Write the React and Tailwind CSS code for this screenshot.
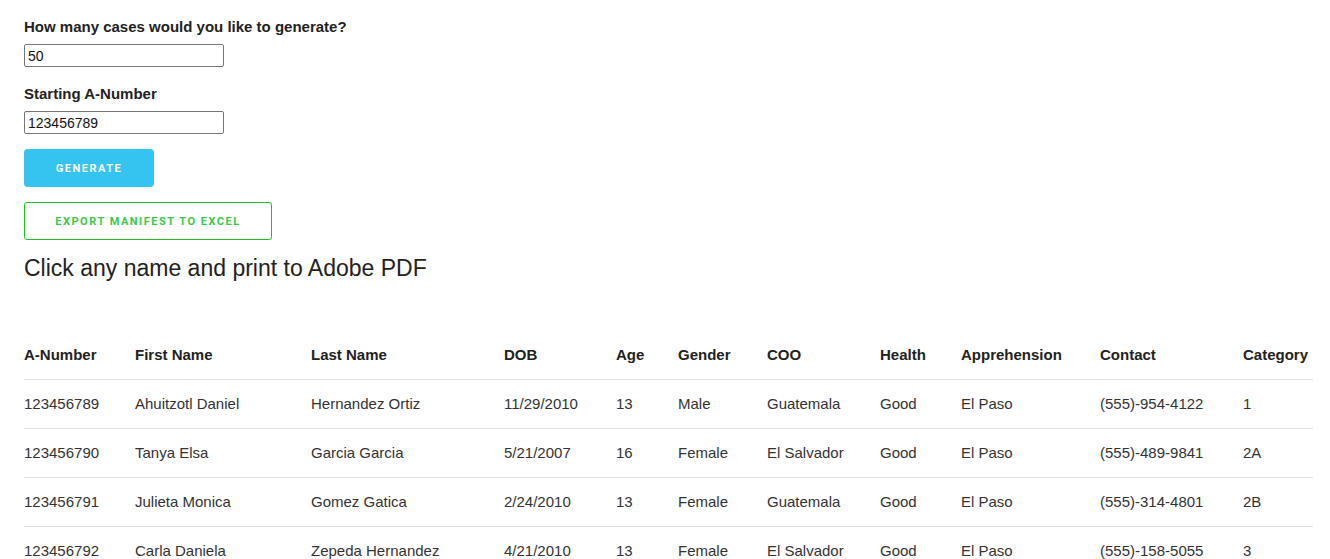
const rows = [
  ['123456789', 'Ahuitzotl Daniel', 'Hernandez Ortiz', '11/29/2010', '13', 'Male', 'Guatemala', 'Good', 'El Paso', '(555)-954-4122', '1'],
  ['123456790', 'Tanya Elsa', 'Garcia Garcia', '5/21/2007', '16', 'Female', 'El Salvador', 'Good', 'El Paso', '(555)-489-9841', '2A'],
  ['123456791', 'Julieta Monica', 'Gomez Gatica', '2/24/2010', '13', 'Female', 'Guatemala', 'Good', 'El Paso', '(555)-314-4801', '2B'],
  ['123456792', 'Carla Daniela', 'Zepeda Hernandez', '4/21/2010', '13', 'Female', 'El Salvador', 'Good', 'El Paso', '(555)-158-5055', '3'],
];

const headers = ['A-Number', 'First Name', 'Last Name', 'DOB', 'Age', 'Gender', 'COO', 'Health', 'Apprehension', 'Contact', 'Category'];
const widths = ['w-[111px]', 'w-[176px]', 'w-[193px]', 'w-[112px]', 'w-[62px]', 'w-[89px]', 'w-[113px]', 'w-[81px]', 'w-[139px]', 'w-[143px]', 'w-[70px]'];

export default function App() {
  return (
    <div className="min-h-screen bg-white px-6 pt-[18px] text-[#212121] font-['Liberation_Sans',Arial,sans-serif]">
      <label htmlFor="count" className="block text-[15px] font-bold leading-[18px] text-[#222]">How many cases would you like to generate?</label>
      <input id="count" defaultValue="50" className="mt-[8px] block h-[23px] w-[200px] rounded-[2px] border border-[#767676] px-[3px] text-[14px] text-[#111] outline-none" />

      <label htmlFor="start" className="mt-[18px] block text-[15px] font-bold leading-[18px] text-[#222]">Starting A-Number</label>
      <input id="start" defaultValue="123456789" className="mt-[8px] block h-[23px] w-[200px] rounded-[2px] border border-[#767676] px-[3px] text-[14px] text-[#111] outline-none" />

      <button className="mt-[15px] block h-[38px] w-[130px] rounded-[4px] bg-[#35c4f0] pt-[3px] font-['Roboto',sans-serif] text-[11px] font-bold tracking-[1.5px] text-white">GENERATE</button>
      <button className="mt-[15px] block h-[38px] w-[248px] rounded-[3px] border border-[#22c022] bg-white pt-[3px] font-['Roboto',sans-serif] text-[11px] font-bold tracking-[1.5px] text-[#3cc84a]">EXPORT MANIFEST TO EXCEL</button>

      <h2 className="mt-[14px] text-[23px] leading-[28px] text-[#222]">Click any name and print to Adobe PDF</h2>

      <table className="mt-[49px] w-[1289px] table-fixed border-collapse text-[15px]">
        <thead>
          <tr className="h-[48px] border-b border-[#e0e0e0]">
            {headers.map((h, i) => (
              <th key={h} className={`${widths[i]} p-0 text-left align-middle font-bold text-[#222]`}>{h}</th>
            ))}
          </tr>
        </thead>
        <tbody>
          {rows.map((r) => (
            <tr key={r[0]} className="h-[49px] border-b border-[#e0e0e0]">
              {r.map((c, i) => (
                <td key={i} className="p-0 pt-[2px] align-middle text-[#333]">{c}</td>
              ))}
            </tr>
          ))}
        </tbody>
      </table>
    </div>
  );
}
